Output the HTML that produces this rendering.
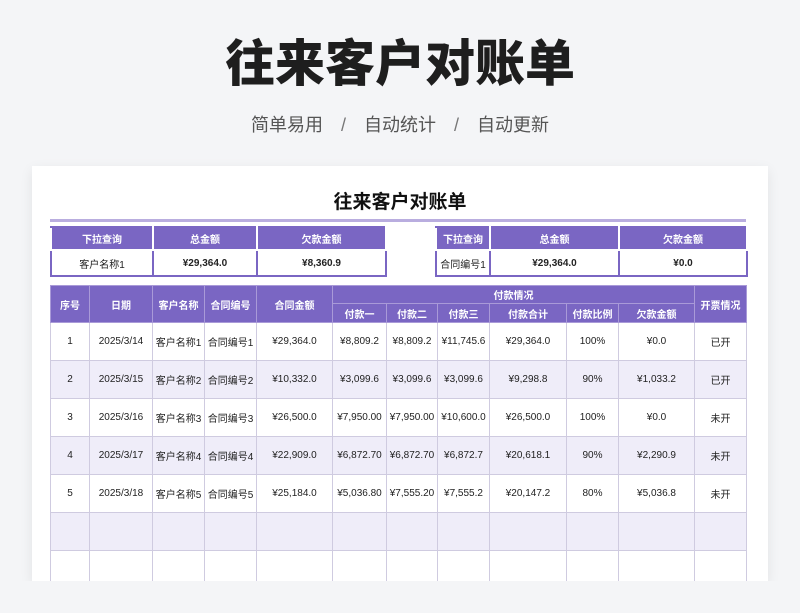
<!DOCTYPE html>
<html><head><meta charset="utf-8"><style>
*{margin:0;padding:0;box-sizing:border-box}
body{width:800px;height:613px;background:#f4f5f7;font-family:"Liberation Sans","Noto Sans CJK SC",sans-serif;position:relative;overflow:hidden}
.h1{position:absolute;top:32px;left:0;width:800px;text-align:center;font-size:50px;font-weight:900;color:#1e1e1e;letter-spacing:0px;line-height:64px}
.sub{position:absolute;top:113px;left:0;width:800px;text-align:center;font-size:18px;color:#555;line-height:24px;word-spacing:0}
.sub span{display:inline-block;margin:0 18px;color:#777}
.card{position:absolute;left:32px;top:166px;width:736px;height:415px;background:#fff;box-shadow:0 4px 12px rgba(0,0,0,.08);overflow:hidden}
.t2{position:absolute;top:190px;left:0;width:800px;text-align:center;font-size:19px;font-weight:bold;color:#111;line-height:26px}
.line{position:absolute;left:50px;top:219px;width:696px;height:3px;background:#b9addf}
table{position:absolute;border-collapse:collapse;table-layout:fixed;font-size:10px;color:#222;text-align:center}
td{border:1px solid #cfcbe0;overflow:hidden;white-space:nowrap}
.p{background:#7a66c3;color:#fff;font-weight:bold;border-color:#a99ad8}
.sum td{border:2px solid #7a66c3}
.sum .p{border-color:#fff;border-top-color:#7a66c3}
.sum td.v{font-weight:bold}
.alt td{background:#efedf9}
</style></head><body>
<div class="h1">往来客户对账单</div>
<div class="sub">简单易用<span>/</span>自动统计<span>/</span>自动更新</div>
<div class="card"></div>
<div class="t2">往来客户对账单</div>
<div class="line"></div>
<table class="sum" style="left:50px;top:226px;width:335px">
<colgroup><col style="width:102px"><col style="width:104px"><col style="width:129px"></colgroup>
<tr style="height:23px"><td class="p">下拉查询</td><td class="p">总金额</td><td class="p">欠款金额</td></tr>
<tr style="height:26px"><td>客户名称1</td><td class="v">¥29,364.0</td><td class="v">¥8,360.9</td></tr>
</table>
<table class="sum" style="left:435px;top:226px;width:311px">
<colgroup><col style="width:54px"><col style="width:129px"><col style="width:128px"></colgroup>
<tr style="height:23px"><td class="p">下拉查询</td><td class="p">总金额</td><td class="p">欠款金额</td></tr>
<tr style="height:26px"><td>合同编号1</td><td class="v">¥29,364.0</td><td class="v">¥0.0</td></tr>
</table>
<table style="left:50px;top:285px;width:696px">
<colgroup><col style="width:39px"><col style="width:63px"><col style="width:52px"><col style="width:52px"><col style="width:76px"><col style="width:54px"><col style="width:51px"><col style="width:52px"><col style="width:77px"><col style="width:52px"><col style="width:76px"><col style="width:52px"></colgroup>
<tr style="height:18px"><td class="p" rowspan="2">序号</td><td class="p" rowspan="2">日期</td><td class="p" rowspan="2">客户名称</td><td class="p" rowspan="2">合同编号</td><td class="p" rowspan="2">合同金额</td><td class="p" colspan="6">付款情况</td><td class="p" rowspan="2">开票情况</td></tr>
<tr style="height:19px"><td class="p">付款一</td><td class="p">付款二</td><td class="p">付款三</td><td class="p">付款合计</td><td class="p">付款比例</td><td class="p">欠款金额</td></tr>
<tr style="height:38px"><td>1</td><td>2025/3/14</td><td>客户名称1</td><td>合同编号1</td><td>¥29,364.0</td><td>¥8,809.2</td><td>¥8,809.2</td><td>¥11,745.6</td><td>¥29,364.0</td><td>100%</td><td>¥0.0</td><td>已开</td></tr>
<tr class="alt" style="height:38px"><td>2</td><td>2025/3/15</td><td>客户名称2</td><td>合同编号2</td><td>¥10,332.0</td><td>¥3,099.6</td><td>¥3,099.6</td><td>¥3,099.6</td><td>¥9,298.8</td><td>90%</td><td>¥1,033.2</td><td>已开</td></tr>
<tr style="height:38px"><td>3</td><td>2025/3/16</td><td>客户名称3</td><td>合同编号3</td><td>¥26,500.0</td><td>¥7,950.00</td><td>¥7,950.00</td><td>¥10,600.0</td><td>¥26,500.0</td><td>100%</td><td>¥0.0</td><td>未开</td></tr>
<tr class="alt" style="height:38px"><td>4</td><td>2025/3/17</td><td>客户名称4</td><td>合同编号4</td><td>¥22,909.0</td><td>¥6,872.70</td><td>¥6,872.70</td><td>¥6,872.7</td><td>¥20,618.1</td><td>90%</td><td>¥2,290.9</td><td>未开</td></tr>
<tr style="height:38px"><td>5</td><td>2025/3/18</td><td>客户名称5</td><td>合同编号5</td><td>¥25,184.0</td><td>¥5,036.80</td><td>¥7,555.20</td><td>¥7,555.2</td><td>¥20,147.2</td><td>80%</td><td>¥5,036.8</td><td>未开</td></tr>
<tr class="alt" style="height:38px"><td></td><td></td><td></td><td></td><td></td><td></td><td></td><td></td><td></td><td></td><td></td><td></td></tr>
<tr style="height:38px"><td></td><td></td><td></td><td></td><td></td><td></td><td></td><td></td><td></td><td></td><td></td><td></td></tr>
</table>
<div style="position:absolute;left:0;top:581px;width:800px;height:32px;background:#f4f5f7"></div>
</body></html>
